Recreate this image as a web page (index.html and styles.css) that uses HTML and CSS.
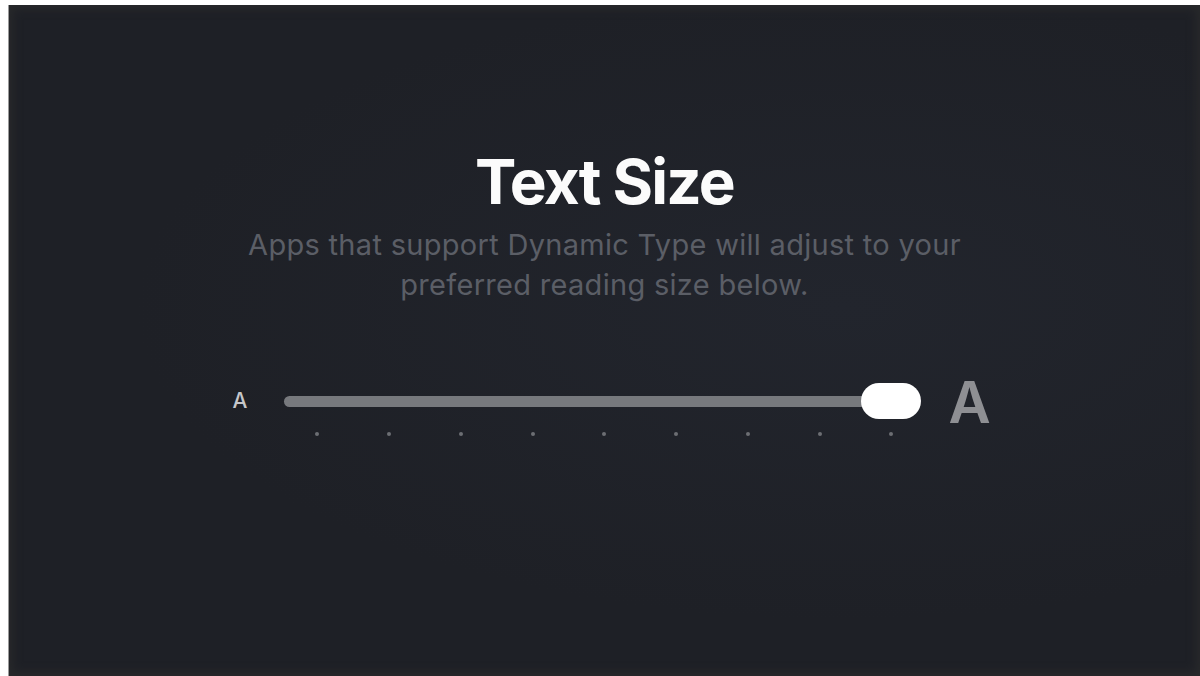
FILE: index.html
```html
<!DOCTYPE html>
<html lang="en">
<head>
    <meta charset="UTF-8">
    <meta name="viewport" content="width=device-width, initial-scale=1.0">
    <title>Text Size</title>
    <link rel="stylesheet" href="styles.css">
</head>
<body>

    <div class="screen">
        <h1 class="title">Text Size</h1>
        <p class="subtitle">Apps that support Dynamic Type will adjust to your<br>preferred reading size below.</p>

        <!-- Size slider: small A, track with steps, large A -->
        <div class="size-slider">
            <span class="a-small">A</span>
            <div class="track-area">
                <div class="track">
                    <div class="bar"></div>
                    <div class="thumb"></div>
                </div>
                <div class="steps">
                    <span class="step"></span>
                    <span class="step"></span>
                    <span class="step"></span>
                    <span class="step"></span>
                    <span class="step"></span>
                    <span class="step"></span>
                    <span class="step"></span>
                    <span class="step"></span>
                    <span class="step"></span>
                </div>
            </div>
            <span class="a-large">A</span>
        </div>
    </div>

</body>
</html>
```

FILE: styles.css
```css
html, body {
    margin: 0;
    height: 100%;
}
body {
    background-color: #fff;
    padding: 5px 0 0 8px;
    box-sizing: border-box;
    font-family: Inter, "Noto Sans", sans-serif;
}
.screen {
    height: 100%;
    box-sizing: border-box;
    padding-top: 138px;
    display: flex;
    flex-direction: column;
    align-items: center;
    border-left: 1px solid #9a9a9a;
    background:
        radial-gradient(ellipse at 70% 45%, #22252d 0%, rgba(34, 37, 45, 0) 60%),
        #1e2026;
    box-shadow: inset 0 0 10px 4px #28292b;
}
.title {
    margin: 0;
    font-size: 62px;
    line-height: 77px;
    font-weight: 700;
    color: #fbfbfb;
    letter-spacing: -1.8px;
}
.subtitle {
    margin: 5px 0 0;
    font-size: 29px;
    line-height: 40px;
    color: #5b5e66;
    text-align: center;
    letter-spacing: 0.3px;
}

/* Slider */
.size-slider {
    margin-top: 78px;
    display: flex;
    align-items: flex-start;
    margin-left: 14px;
}
.a-small {
    font-size: 21px;
    font-weight: 500;
    color: #c6c7ca;
    line-height: 36px;
    width: 52px;
}
.track-area {
    width: 637px;
}
.track {
    position: relative;
    height: 36px;
    display: flex;
    align-items: center;
}
.bar {
    width: 600px;
    height: 11px;
    border-radius: 6px;
    background-color: #77797d;
}
.thumb {
    position: absolute;
    right: 0;
    top: 0;
    width: 60px;
    height: 36px;
    border-radius: 18px;
    background-color: #fff;
}
.steps {
    display: flex;
    justify-content: space-between;
    margin: 13px 28px 0 31px;
}
.step {
    width: 4px;
    height: 4px;
    border-radius: 50%;
    background-color: #6c6e73;
}
.a-large {
    margin-left: 27px;
    margin-top: -8px;
    font-size: 58px;
    font-weight: 600;
    line-height: 54px;
    color: #8e8f93;
}
```
